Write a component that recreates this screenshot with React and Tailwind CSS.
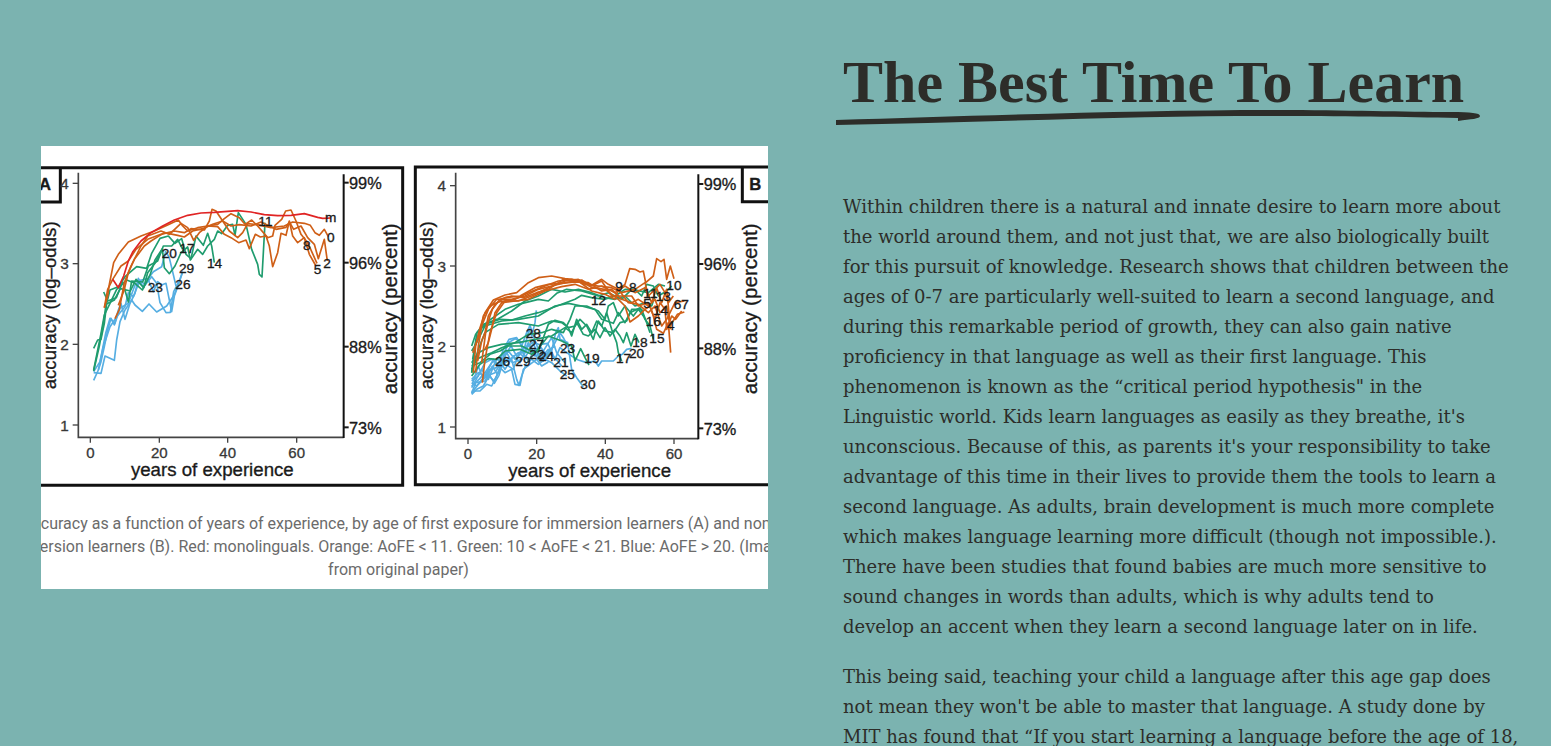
import React from "react";

const ORANGE = "#cf5f17";
const GREEN = "#1f9c6e";
const BLUE = "#56aee2";
const RED = "#e02424";

const panelA = {
  frame: "M-10 65H1085V1018H-10M58 65V168H-10",
  letter: { x: -6, text: "A" },
  left: 112,
  bottom: 874,
  right: 908,
  leftTicks: [112, 353, 595, 837],
  rightTicks: [110, 350, 602, 844],
  xTicks: [148, 355, 560, 767],
  xTitle: 514,
  yTitle: 44,
  rightTitle: 1068,
  labels: [
    ["m", 852, 228], ["0", 858, 287], ["11", 652, 239], ["8", 786, 313], ["2", 847, 365], ["5", 818, 384],
    ["14", 498, 367], ["17", 415, 320], ["20", 362, 336], ["29", 414, 380], ["23", 320, 438], ["26", 403, 429],
  ],
  lines: [
    [BLUE, "158,703 172,672 180,647 190,602 200,552 210,517 220,537 232,492 240,472 252,520 267,472 282,442 292,397 307,424 322,402 337,437 350,407 362,417 375,412 392,497 400,450 412,417 425,377"],
    [BLUE, "158,680 180,682 192,630 220,643 227,582 237,527 252,492 272,462 282,477 304,496 324,474 347,498 377,480 400,446 425,377"],
    [BLUE, "158,677 177,647 194,562 207,517 222,532 237,487 262,472 282,417 302,402 322,397 337,377 362,362 374,317 384,332 392,365 405,420"],
    [BLUE, "172,672 187,602 207,542 227,512 252,482 262,440 277,452 297,402 312,417 332,392 347,412 357,470 375,500 388,499 398,437 412,410"],
    [GREEN, "158,607 170,582 180,580 190,532 197,472 207,432 232,422 252,392 287,362 317,367 332,322 357,277 382,270 402,292 422,278 435,325 450,338 465,270 487,298 500,262 512,300 520,350"],
    [GREEN, "158,672 168,622 180,562 190,507 207,472 227,430 257,402 282,412 304,432 327,387 342,342 364,308 370,365 385,383 402,360 420,320 440,303 448,342 470,310 485,325 500,300 520,280 530,255 542,263 560,238 575,235 582,268 592,200 615,235 632,310 650,355 655,385 663,393 672,230"],
    [GREEN, "188,438 200,465 226,455 245,408 262,468 272,405 305,408 322,360 350,345 367,300 392,300 410,280 425,310"],
    [GREEN, "158,675 175,600 188,528 195,475 220,462 238,428 268,435 285,400 308,425 320,380 342,352 360,318"],
    [ORANGE, "190,485 200,450 205,415 218,350 232,325 262,288 300,270 340,255 380,237 412,222 425,240 440,255 470,245 500,240 530,235 550,218 570,203 595,215 612,235 632,222 650,240 680,275 695,270 702,238 722,220 734,195 750,192 765,225 780,265 800,290 828,352"],
    [ORANGE, "190,485 200,430 215,400 240,360 262,345 285,310 320,280 360,265 400,255 430,260 450,248 490,252 505,225 513,190 525,195 545,225 565,255 590,275 605,260 620,233 650,236 690,245 730,240 755,228 790,232 808,238 822,260 835,268 850,250 862,272"],
    [ORANGE, "232,478 250,430 262,380 280,340 310,300 330,285 370,260 410,268 430,273 455,255 485,248 515,235 545,225 570,240 595,236 630,240 660,228 705,250 735,244 745,228 758,250 780,240 800,275 820,295 832,338 850,280 859,345"],
    [ORANGE, "222,518 235,490 250,410 270,360 300,300 320,270 360,255 385,265 420,232 440,245 458,283 475,260 500,240 530,242 550,265 570,275 593,290 615,282 625,308 643,265 658,273 675,270 685,300 695,362 710,320 720,262 735,268 745,225 755,270 770,290 790,275 805,325 825,360"],
    [RED, "215,400 232,425 248,390 262,345 275,318 300,285 330,260 365,240 400,222 440,208 480,201 520,199 560,196 590,194 630,198 670,206 710,209 750,208 790,203 830,214 845,217 870,216"],
  ],
};

const panelB = {
  frame: "M1110 63H31V1016H1110M1012 63V167H1110",
  letter: { x: 1033, text: "B" },
  left: 152,
  bottom: 878,
  right: 880,
  leftTicks: [119, 360, 601, 843],
  rightTicks: [114, 354, 607, 847],
  xTicks: [189, 395, 601, 807],
  xTitle: 554,
  yTitle: 85,
  rightTitle: 1057,
  labels: [
    ["9", 631, 436], ["8", 672, 438], ["11", 715, 456], ["13", 752, 465], ["10", 784, 432], ["5", 715, 487],
    ["67", 806, 490], ["14", 744, 507], ["16", 722, 541], ["4", 786, 553], ["12", 558, 476], ["28", 362, 575],
    ["27", 372, 610], ["22", 373, 638], ["24", 402, 644], ["26", 270, 660], ["29", 331, 659], ["23", 465, 621],
    ["21", 445, 664], ["25", 464, 699], ["30", 526, 729], ["19", 538, 651], ["17", 633, 652], ["18", 682, 602],
    ["20", 672, 636], ["15", 733, 591],
  ],
  lines: [
    [BLUE, "200,745 215,730 235,720 252,690 267,705 285,670 300,650 320,640 335,700 342,718 350,690 365,650 380,640 400,655 420,640 440,650 465,675 485,690"],
    [BLUE, "200,735 225,735 245,715 260,720 275,690 290,650 310,660 325,670 340,625 360,600 372,550 380,570 390,530 394,493"],
    [BLUE, "200,705 220,690 240,650 260,640 280,655 295,610 312,580 335,575 350,600 365,560 375,538 385,570 400,610 420,630 435,610 450,600"],
    [BLUE, "200,720 222,700 240,680 260,650 280,640 300,670 325,630 345,650 365,610 385,620 405,600 425,630 445,600 455,580 465,560 475,575 490,605 500,670 515,695 535,722"],
    [BLUE, "200,710 215,720 235,695 255,670 275,665 290,630 310,615 330,640 352,618 370,645 390,610 415,645 435,622 455,642 470,660"],
    [BLUE, "200,740 220,715 245,690 270,680 295,640 315,640 340,620 360,635 385,592 405,640 430,610 450,640 465,605 485,620 500,630 520,642 545,650 570,645 580,660 590,645 625,645 640,630 652,625 665,610 680,607"],
    [BLUE, "200,700 220,680 240,690 265,640 285,660 310,590 330,578 345,585 355,620 372,598 390,630 412,620 440,575 455,620 480,650"],
    [BLUE, "200,725 230,670 250,700 270,650 300,680 320,670 330,715 345,718 355,670 375,655 395,640 410,660 430,648"],
    [BLUE, "200,742 212,710 240,705 262,660 277,685 305,620 322,650 350,640 370,590 387,620 405,645 440,615 452,560 460,545 465,580 490,590"],
    [BLUE, "202,715 220,660 235,700 250,680 268,712 282,688 300,628 318,600 336,632 358,606 386,588 403,596 428,592 448,635"],
    [GREEN, "200,680 210,600 225,550 250,532 285,520 320,522 360,510 400,500 430,490 470,475 510,460 530,448 560,455 600,460 630,450 660,430 690,430 710,450 725,415 745,420 760,450 785,435 800,420"],
    [GREEN, "200,600 212,565 235,535 280,518 320,495 360,465 400,450 440,430 480,438 520,430 560,440 600,455 630,460 660,450 690,480 720,470 740,480 750,450"],
    [GREEN, "200,615 215,590 240,540 290,525 340,520 400,510 450,480 490,472 530,480 570,490 590,520 625,532 640,500 660,530 675,500 705,485 720,520 735,540 745,580"],
    [GREEN, "200,680 220,610 240,560 280,535 340,530 400,540 440,525 470,530 490,545 500,570 515,520 530,550 545,535 560,560 575,525 590,540 605,500 620,550 635,590 640,620 650,645"],
    [GREEN, "200,650 220,620 250,605 290,595 340,590 390,580 440,570 480,545 500,560 515,530 535,565 550,570 570,550 585,575 600,545 615,570 630,550 645,570 655,590 665,560 678,600 690,565 702,590"],
    [GREEN, "200,660 225,650 255,625 285,615 310,600 350,600 390,620 430,570 470,585 500,600 510,645 527,608 540,635 552,657"],
    [GREEN, "200,690 225,655 250,638 275,640 300,615 345,610 380,625 400,615 430,535 450,523 475,530 490,545 510,540 525,520 545,540 565,580 580,525 600,555 625,560 645,530 665,525 680,490 710,490 725,530 735,560"],
    [GREEN, "200,670 215,640 235,630 260,620 290,605 330,590 370,565 410,560 440,550 475,560 495,520 510,480 545,480 580,495 600,520 610,480 625,470 640,510 660,480 685,510 700,490 715,510"],
    [GREEN, "203,640 216,560 250,525 300,490 340,475 400,460 430,465 455,442 485,430 530,435 580,450 610,440 650,460 680,430 730,440 760,415 780,420"],
    [ORANGE, "205,680 212,600 225,545 240,500 265,462 300,447 335,440 370,410 400,395 440,390 480,398 520,402 560,418 590,400 610,415 640,430 660,415 674,368 690,370 705,378 715,375 722,410 745,390 755,338 768,347 777,340 785,400 796,360 807,398"],
    [ORANGE, "232,710 240,640 255,560 275,500 300,465 340,465 380,450 430,425 480,405 520,400 560,425 600,430 640,460 660,480 675,528 700,510 720,490 735,480 745,510 755,550 775,562 790,530 797,620"],
    [ORANGE, "212,680 220,600 230,540 250,490 275,460 320,460 360,450 400,430 440,420 480,410 530,402 560,420 590,405 620,450 650,450 680,450 700,480 730,470 750,520 765,470 780,490 785,550 800,510 812,520 830,495"],
    [ORANGE, "203,620 225,560 235,510 255,480 280,468 330,460 370,440 420,420 460,405 500,400 540,415 580,420 620,425 650,440 690,430 720,410 730,450 750,430 765,415 780,440 790,470 805,450"],
    [ORANGE, "218,645 230,585 240,560 250,510 270,475 300,455 345,450 390,425 430,415 470,412 510,408 550,410 590,435 620,430 650,460 680,470 700,460 730,480 750,460 765,500 785,480 795,540 817,505 838,498"],
    [ORANGE, "240,610 250,590 260,550 270,500 290,470 330,465 370,460 420,435 470,422 510,415 550,430 590,420 630,440 660,420 690,440 720,425 740,470 755,425 770,470 785,430 790,480 796,550"],
    [ORANGE, "230,650 242,560 252,520 262,490 285,460 320,450 355,455 395,440 430,430 475,400 520,405 560,435 600,445 630,460 640,430 670,470 700,475 730,500 750,480 770,540 785,520 810,470 838,465"],
  ],
};

function Panel({ panel }) {
  const { left, bottom, right } = panel;
  const leftNames = ["4", "3", "2", "1"];
  const rightNames = ["99%", "96%", "88%", "73%"];
  const xNames = ["0", "20", "40", "60"];
  return (
    <g>
      <g fill="none" strokeWidth="5" strokeLinejoin="round">
        {panel.lines.map(([color, points], i) => (
          <polyline key={i} points={points} stroke={color} />
        ))}
      </g>
      <path d={panel.frame} fill="none" stroke="#111" strokeWidth="9" />
      <path d={`M${left} 80V${bottom}H${right}`} fill="none" stroke="#444" strokeWidth="5" />
      <path d={`M${right} 85V${bottom + 2}`} stroke="#111" strokeWidth="6" />
      <g fill="#333" stroke="#444" strokeWidth="4">
        {panel.leftTicks.map((y, i) => (
          <g key={y}>
            <path d={`M${left - 17} ${y}H${left}`} />
            <text x={left - 29} y={y + 17} textAnchor="end" fontSize="46" strokeWidth="1">{leftNames[i]}</text>
          </g>
        ))}
        {panel.xTicks.map((x, i) => (
          <g key={x}>
            <path d={`M${x} ${bottom}V${bottom + 16}`} />
            <text x={x} y={bottom + 61} textAnchor="middle" fontSize="45" strokeWidth="1">{xNames[i]}</text>
          </g>
        ))}
      </g>
      <g fill="#1a1a1a" stroke="#1a1a1a" strokeWidth="1">
        {panel.rightTicks.map((y, i) => (
          <g key={y}>
            <path d={`M${right} ${y}H${right + 15}`} strokeWidth="6" />
            <text x={right + 16} y={y + 19} fontSize="49">{rightNames[i]}</text>
          </g>
        ))}
        <text x={panel.xTitle} y={bottom + 116} textAnchor="middle" fontSize="56">years of experience</text>
        <text transform={`translate(${panel.yTitle} 730) rotate(-90)`} fontSize="56">accuracy (log–odds)</text>
        <text transform={`translate(${panel.rightTitle} 745) rotate(-90)`} fontSize="62">accuracy (percent)</text>
        <text x={panel.letter.x} y="133" fontSize="50" fontWeight="700">{panel.letter.text}</text>
        {panel.labels.map(([text, x, y]) => (
          <text key={text} x={x} y={y} fontSize="41">{text}</text>
        ))}
      </g>
    </g>
  );
}

const captionLines = [
  "Accuracy as a function of years of experience, by age of first exposure for immersion learners (A) and non-",
  "immersion learners (B). Red: monolinguals. Orange: AoFE < 11. Green: 10 < AoFE < 21. Blue: AoFE > 20. (Image",
  "from original paper)",
];

const paragraphs = [
  [
    "Within children there is a natural and innate desire to learn more about",
    "the world around them, and not just that, we are also biologically built",
    "for this pursuit of knowledge. Research shows that children between the",
    "ages of 0-7 are particularly well-suited to learn a second language, and",
    "during this remarkable period of growth, they can also gain native",
    "proficiency in that language as well as their first language. This",
    "phenomenon is known as the “critical period hypothesis\" in the",
    "Linguistic world. Kids learn languages as easily as they breathe, it's",
    "unconscious. Because of this, as parents it's your responsibility to take",
    "advantage of this time in their lives to provide them the tools to learn a",
    "second language. As adults, brain development is much more complete",
    "which makes language learning more difficult (though not impossible.).",
    "There have been studies that found babies are much more sensitive to",
    "sound changes in words than adults, which is why adults tend to",
    "develop an accent when they learn a second language later on in life.",
  ],
  [
    "This being said, teaching your child a language after this age gap does",
    "not mean they won't be able to master that language. A study done by",
    "MIT has found that “If you start learning a language before the age of 18,",
  ],
];

export default function App() {
  return (
    <main className="grid h-screen grid-cols-[727fr_667fr] items-start gap-[75px] overflow-hidden bg-[#7bb3b0] px-[41px] text-[#2d2d29]">
      <figure className="mt-[146px] min-w-0 overflow-hidden bg-white pb-2">
        <svg
          viewBox="0 0 2181 1098"
          className="block w-full font-['Liberation_Sans',sans-serif]"
          role="img"
          aria-label="Accuracy by years of experience"
        >
          <Panel panel={panelA} />
          <g transform="translate(1092 0)">
            <Panel panel={panelB} />
          </g>
        </svg>
        <figcaption className="flex flex-col items-center whitespace-nowrap pr-3 font-[Roboto,sans-serif] text-base leading-[23px] text-[#6b6b6b]">
          {captionLines.map((line) => (
            <span key={line}>{line}</span>
          ))}
        </figcaption>
      </figure>
      <article className="min-w-0 pt-[54px]">
        <h1 className="whitespace-nowrap font-['Liberation_Serif',serif] text-[60px] leading-[56px] font-bold">
          The Best Time To Learn
        </h1>
        <svg viewBox="0 0 645 16" className="-ml-[7px] block w-[645px] max-w-none" aria-hidden="true">
          <path
            d="M0 10C140 6 300 0 440 0C510 0 570 2 615 2C635 2 644 3 644 6C644 9 635 9 622 11V8C570 7 500 6 430 6C300 6 150 12 0 15Z"
            fill="currentColor"
          />
        </svg>
        <div className="mt-[66px] flex flex-col gap-5 font-['DejaVu_Serif',serif] text-lg leading-[30px]">
          {paragraphs.map((lines, i) => (
            <p key={i}>
              {lines.map((line) => (
                <span key={line} className="block whitespace-nowrap">{line} </span>
              ))}
            </p>
          ))}
        </div>
      </article>
    </main>
  );
}
